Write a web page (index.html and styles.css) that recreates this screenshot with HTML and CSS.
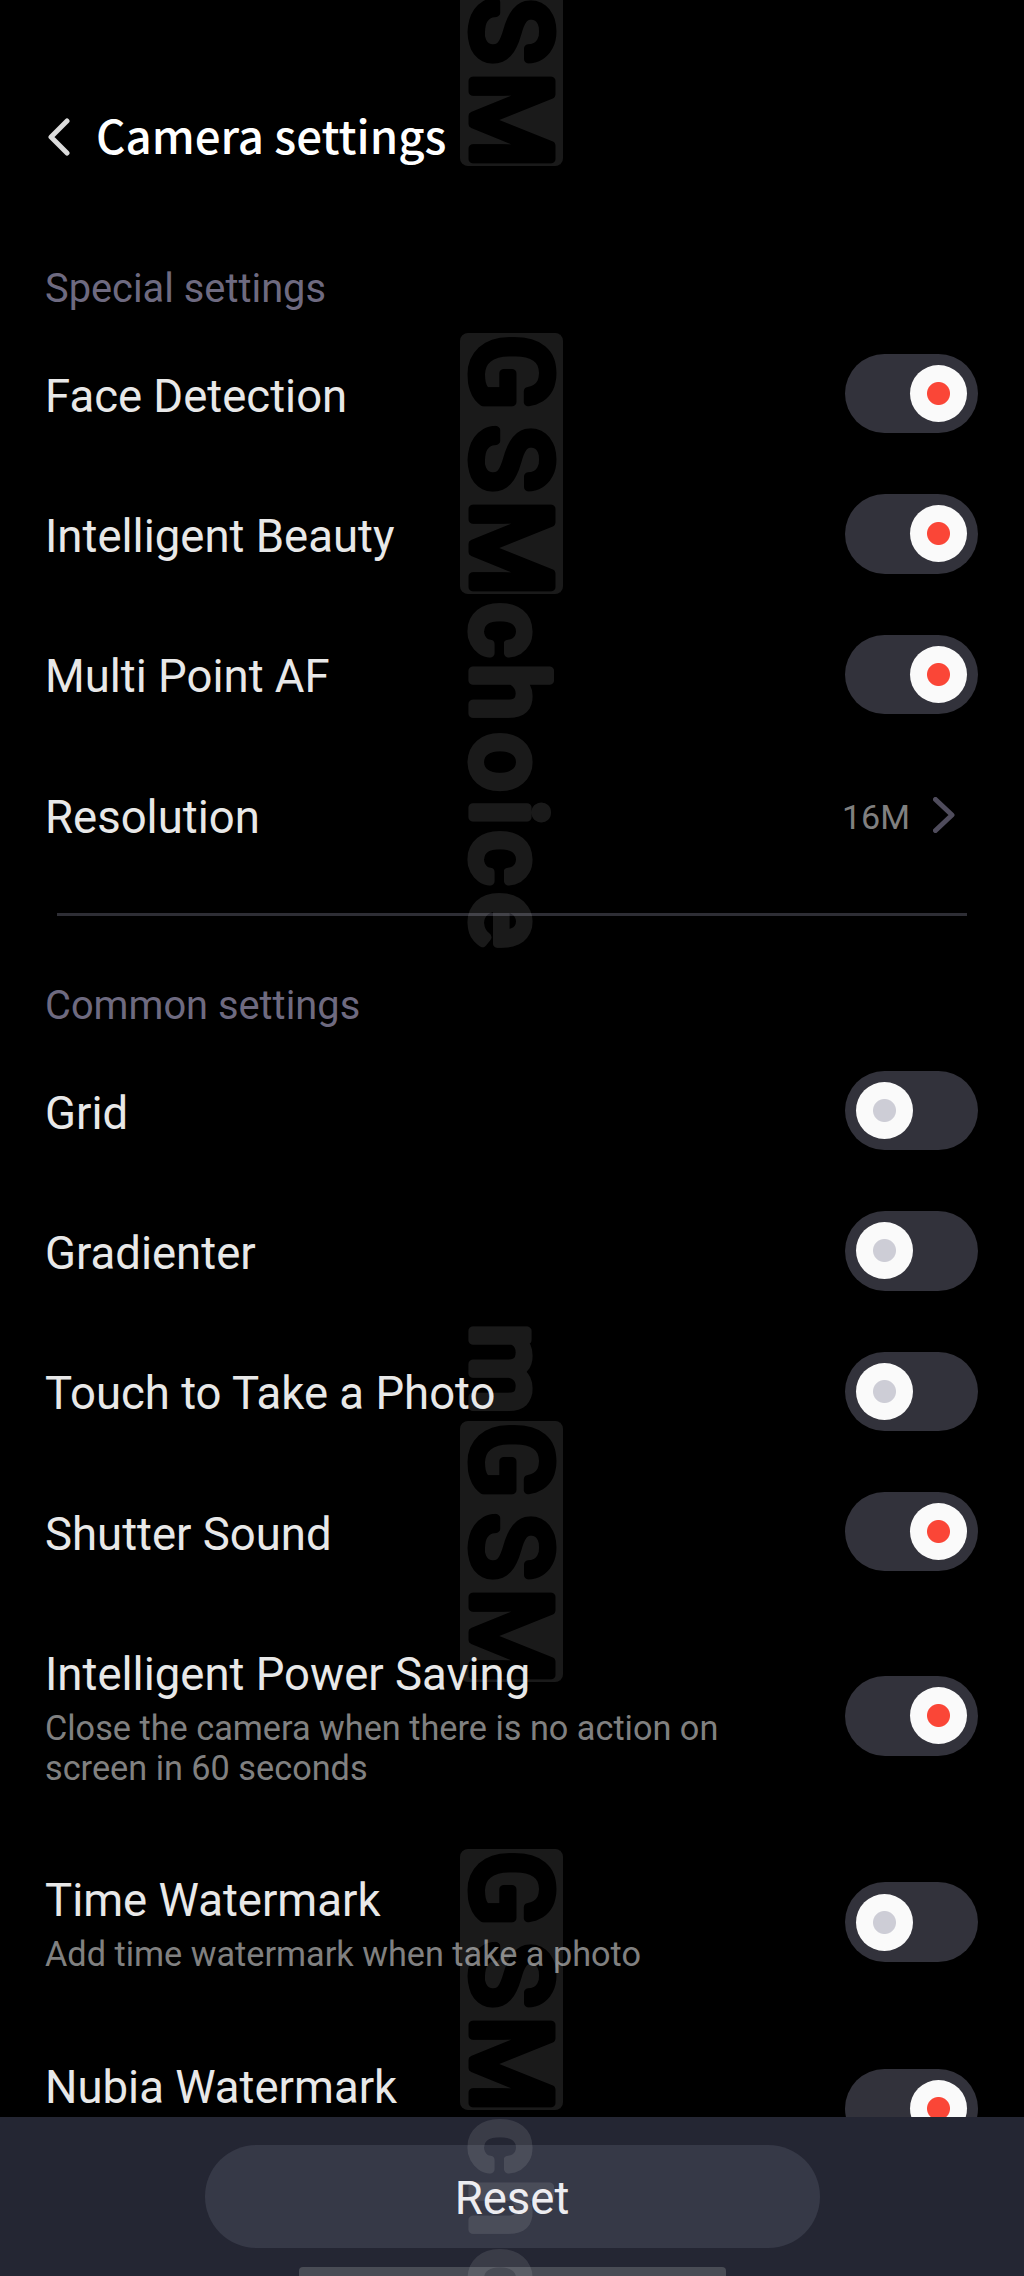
FILE: index.html
```html
<!DOCTYPE html>
<html lang="en">
<head>
    <meta charset="UTF-8">
    <meta name="viewport" content="width=device-width, initial-scale=1.0">
    <title>Camera settings</title>
    <link rel="stylesheet" href="styles.css">
</head>
<body>
    <div class="screen">
        <div class="content">
            <header class="header">
                <svg class="back" viewBox="0 0 22 38">
                    <path d="M19 3L3 19L19 35"/>
                </svg>
                <h1>Camera settings</h1>
            </header>

            <section>
                <h2>Special settings</h2>
                <div class="row">
                    <div class="label">Face Detection</div>
                    <div class="switch on"></div>
                </div>
                <div class="row">
                    <div class="label">Intelligent Beauty</div>
                    <div class="switch on"></div>
                </div>
                <div class="row">
                    <div class="label">Multi Point AF</div>
                    <div class="switch on"></div>
                </div>
                <div class="row">
                    <div class="label">Resolution</div>
                    <div class="value">
                        <span>16M</span>
                        <svg class="arrow" viewBox="0 0 22 36">
                            <path d="M2.5 2.5L19 18L2.5 33.5"/>
                        </svg>
                    </div>
                </div>
            </section>

            <div class="divider"></div>

            <section>
                <h2>Common settings</h2>
                <div class="row">
                    <div class="label">Grid</div>
                    <div class="switch"></div>
                </div>
                <div class="row">
                    <div class="label">Gradienter</div>
                    <div class="switch"></div>
                </div>
                <div class="row">
                    <div class="label">Touch to Take a Photo</div>
                    <div class="switch"></div>
                </div>
                <div class="row">
                    <div class="label">Shutter Sound</div>
                    <div class="switch on"></div>
                </div>
                <div class="row row-large">
                    <div class="label">
                        Intelligent Power Saving
                        <p>Close the camera when there is no action on screen in 60 seconds</p>
                    </div>
                    <div class="switch on"></div>
                </div>
                <div class="row row-medium">
                    <div class="label">
                        Time Watermark
                        <p>Add time watermark when take a photo</p>
                    </div>
                    <div class="switch"></div>
                </div>
                <div class="row row-last">
                    <div class="label">Nubia Watermark</div>
                    <div class="switch on"></div>
                </div>
            </section>
        </div>

        <footer class="footer">
            <button type="button">Reset</button>
            <div class="nav-bar"></div>
        </footer>

        <!-- Watermark over the whole screen -->
        <svg class="watermark" viewBox="0 0 1024 2276">
            <defs>
                <mask id="gsmMask" maskUnits="userSpaceOnUse" x="-5" y="-100" width="275" height="120">
                    <rect x="0" y="-91" width="261" height="103" rx="8" fill="#fff"/>
                    <text class="cut" x="2 93 167" y="-1">GSM</text>
                </mask>
                <g id="gsm">
                    <rect x="0" y="-91" width="261" height="103" mask="url(#gsmMask)"/>
                </g>
                <g id="choice">
                    <text x="270 331 400 467 498 560" y="-1">choice</text>
                </g>
            </defs>
            <g class="marks">
                <use href="#gsm" transform="translate(472 -95) rotate(90)"/>
                <g transform="translate(472 333) rotate(90)">
                    <use href="#gsm"/>
                    <use href="#choice"/>
                </g>
                <g transform="translate(472 1421) rotate(90)">
                    <text x="-97" y="-1">m</text>
                    <use href="#gsm"/>
                </g>
                <g transform="translate(472 1849) rotate(90)">
                    <use href="#gsm"/>
                    <use href="#choice"/>
                </g>
            </g>
        </svg>
    </div>
</body>
</html>
```
FILE: styles.css
```css
* {
    margin: 0;
    padding: 0;
    box-sizing: border-box;
}

body {
    background-color: #000;
    color: #e8e8e8;
    font-family: Roboto, sans-serif;
}

.screen {
    position: relative;
    display: flex;
    flex-direction: column;
    width: 1024px;
    height: 2276px;
    overflow: hidden;
}

.content {
    height: 2117px;
    overflow: hidden;
    padding: 0 46px 0 45px;
}

.header {
    display: flex;
    align-items: center;
    gap: 26px;
    height: 254px;
    padding: 20px 0 0 3px;
}

.back {
    width: 22px;
    height: 38px;
    fill: none;
    stroke: #dcdcdc;
    stroke-width: 5;
    stroke-linecap: round;
    stroke-linejoin: round;
}

h1 {
    padding-bottom: 7px;
    font-family: "Noto Sans CJK SC", sans-serif;
    font-size: 45.6px;
    font-weight: 500;
    line-height: 60px;
    color: #fff;
}

h2 {
    height: 69.4px;
    padding-top: 11px;
    font-size: 39.8px;
    font-weight: 400;
    line-height: 47px;
    color: #6e6a80;
}

.row {
    display: flex;
    justify-content: space-between;
    align-items: center;
    height: 140.4px;
}

.row-large {
    height: 228px;
}

.row-medium {
    height: 184.6px;
}

.row-last {
    height: 187px;
    align-items: flex-start;
    padding-top: 54px;
}

.row-last .label {
    margin-top: -8px;
    padding-top: 0;
}

.label {
    max-width: 700px;
    padding-top: 5.5px;
    font-size: 45.5px;
    line-height: 53.3px;
}

.label p {
    margin-top: 7px;
    font-size: 34.25px;
    line-height: 40px;
    color: #808080;
}

.row-large .label,
.row-medium .label {
    padding-top: 4px;
}

.switch {
    display: flex;
    align-items: center;
    width: 133px;
    height: 79.5px;
    padding: 0 11px;
    border-radius: 40px;
    background-color: #32323b;
}

.switch::before {
    content: "";
    width: 57px;
    height: 57px;
    border-radius: 50%;
    background: radial-gradient(circle, #cdcdd6 11px, #fafafa 12px);
}

.switch.on {
    justify-content: flex-end;
}

.switch.on::before {
    background: radial-gradient(circle, #fa4637 11px, #fafafa 12px);
}

.value {
    display: flex;
    align-items: center;
    gap: 23px;
    padding-right: 23px;
    font-size: 34.1px;
    color: #808080;
}

.value span {
    padding-top: 5px;
}

.arrow {
    width: 22px;
    height: 36px;
    fill: none;
    stroke: #4f4c5c;
    stroke-width: 5;
    stroke-linecap: round;
    stroke-linejoin: round;
}

.divider {
    height: 3px;
    margin: 28px 11px 55px 12px;
    background-color: #2e2e35;
}

.footer {
    display: flex;
    flex-direction: column;
    align-items: center;
    height: 159px;
    padding-top: 28px;
    background-color: #242633;
}

button {
    width: 615px;
    height: 103px;
    padding-top: 3px;
    border: none;
    border-radius: 52px;
    background-color: #363947;
    color: #ececf0;
    font-family: Roboto, sans-serif;
    font-size: 45.5px;
}

.nav-bar {
    width: 427px;
    height: 9px;
    margin-top: 19px;
    border-radius: 4px 4px 0 0;
    background-color: #494c55;
}

.watermark {
    position: absolute;
    top: 0;
    left: 0;
    width: 1024px;
    height: 2276px;
    pointer-events: none;
}

.marks {
    fill: #fff;
    opacity: 0.105;
}

.watermark text {
    font-family: Roboto, sans-serif;
    font-size: 102px;
    stroke: #fff;
    stroke-width: 9;
    stroke-linecap: round;
    stroke-linejoin: round;
}

.watermark .cut {
    fill: #000;
    font-size: 110px;
    stroke: #000;
}
```
